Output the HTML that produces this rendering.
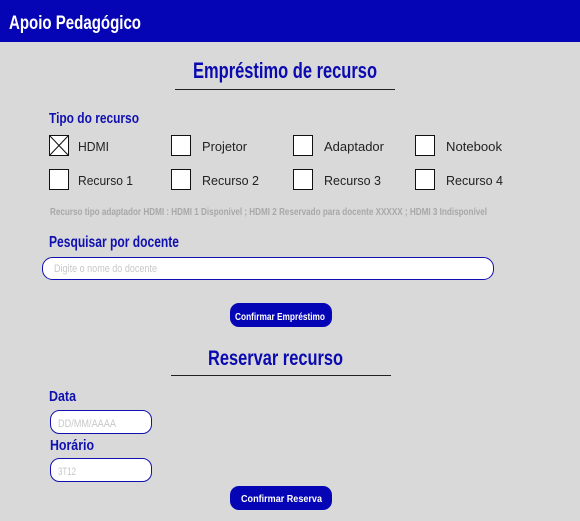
<!DOCTYPE html>
<html><head><meta charset="utf-8"><style>
html,body{margin:0;padding:0;background:#d9d9d9;}
svg{display:block;font-family:"Liberation Sans",sans-serif;}
</style></head><body>
<svg width="580" height="521" viewBox="0 0 580 521" xmlns="http://www.w3.org/2000/svg">
<rect width="580" height="521" fill="#d9d9d9"/>
<rect width="580" height="42" fill="#0505b5"/>
<text x="9" y="29" font-size="19" font-weight="bold" fill="#fff" textLength="132" lengthAdjust="spacingAndGlyphs">Apoio Pedagógico</text>

<text x="193" y="78" font-size="22" font-weight="bold" fill="#0a0ab0" textLength="184" lengthAdjust="spacingAndGlyphs">Empréstimo de recurso</text>
<rect x="175" y="89" width="220" height="1" fill="#222"/>

<text x="49" y="123" font-size="15" font-weight="bold" fill="#1010b0" textLength="90" lengthAdjust="spacingAndGlyphs">Tipo do recurso</text>

<g fill="#fff" stroke="#111" stroke-width="1">
<rect x="49.5" y="135.5" width="19" height="20"/>
<rect x="171.5" y="135.5" width="19" height="20"/>
<rect x="293.5" y="135.5" width="19" height="20"/>
<rect x="415.5" y="135.5" width="19" height="20"/>
<rect x="49.5" y="169.5" width="19" height="20"/>
<rect x="171.5" y="169.5" width="19" height="20"/>
<rect x="293.5" y="169.5" width="19" height="20"/>
<rect x="415.5" y="169.5" width="19" height="20"/>
<path d="M49.5 135.5 L68.5 155.5 M68.5 135.5 L49.5 155.5" fill="none"/>
</g>
<g font-size="13" fill="#222">
<text x="78" y="151" textLength="31" lengthAdjust="spacingAndGlyphs">HDMI</text>
<text x="202" y="151" textLength="45" lengthAdjust="spacingAndGlyphs">Projetor</text>
<text x="324" y="151" textLength="60" lengthAdjust="spacingAndGlyphs">Adaptador</text>
<text x="446" y="151" textLength="56" lengthAdjust="spacingAndGlyphs">Notebook</text>
<text x="78" y="185" textLength="55" lengthAdjust="spacingAndGlyphs">Recurso 1</text>
<text x="202" y="185" textLength="57" lengthAdjust="spacingAndGlyphs">Recurso 2</text>
<text x="324" y="185" textLength="57" lengthAdjust="spacingAndGlyphs">Recurso 3</text>
<text x="446" y="185" textLength="57" lengthAdjust="spacingAndGlyphs">Recurso 4</text>
</g>

<text x="50" y="215" font-size="10.5" font-weight="bold" fill="#a8a8a8" textLength="437" lengthAdjust="spacingAndGlyphs">Recurso tipo adaptador HDMI : HDMI 1 Disponível ; HDMI 2 Reservado para docente XXXXX ; HDMI 3 Indisponível</text>

<text x="49" y="247" font-size="16" font-weight="bold" fill="#1010b0" textLength="130" lengthAdjust="spacingAndGlyphs">Pesquisar por docente</text>
<rect x="42.5" y="257.5" width="451" height="22" rx="10" fill="#fff" stroke="#1010b0"/>
<text x="54" y="272" font-size="11" fill="#c8c8c8" textLength="103" lengthAdjust="spacingAndGlyphs">Digite o nome do docente</text>

<rect x="230" y="303" width="102" height="24" rx="9" fill="#0505b5"/>
<text x="235" y="320" font-size="10.5" font-weight="bold" fill="#fff" textLength="90" lengthAdjust="spacingAndGlyphs">Confirmar Empréstimo</text>

<text x="208" y="365" font-size="21" font-weight="bold" fill="#0a0ab0" textLength="135" lengthAdjust="spacingAndGlyphs">Reservar recurso</text>
<rect x="171" y="375" width="220" height="1" fill="#222"/>

<text x="49" y="401" font-size="15" font-weight="bold" fill="#1010b0" textLength="27" lengthAdjust="spacingAndGlyphs">Data</text>
<rect x="50.5" y="410.5" width="101" height="23" rx="9" fill="#fff" stroke="#1010b0"/>
<text x="58" y="427" font-size="11" fill="#c8c8c8" textLength="58" lengthAdjust="spacingAndGlyphs">DD/MM/AAAA</text>

<text x="50" y="450" font-size="15" font-weight="bold" fill="#1010b0" textLength="44" lengthAdjust="spacingAndGlyphs">Horário</text>
<rect x="50.5" y="458.5" width="101" height="23" rx="9" fill="#fff" stroke="#1010b0"/>
<text x="58" y="475" font-size="11" fill="#c8c8c8" textLength="18" lengthAdjust="spacingAndGlyphs">3T12</text>

<rect x="230" y="486" width="102" height="24" rx="9" fill="#0505b5"/>
<text x="241" y="502" font-size="10.5" font-weight="bold" fill="#fff" textLength="81" lengthAdjust="spacingAndGlyphs">Confirmar Reserva</text>
</svg>
</body></html>
